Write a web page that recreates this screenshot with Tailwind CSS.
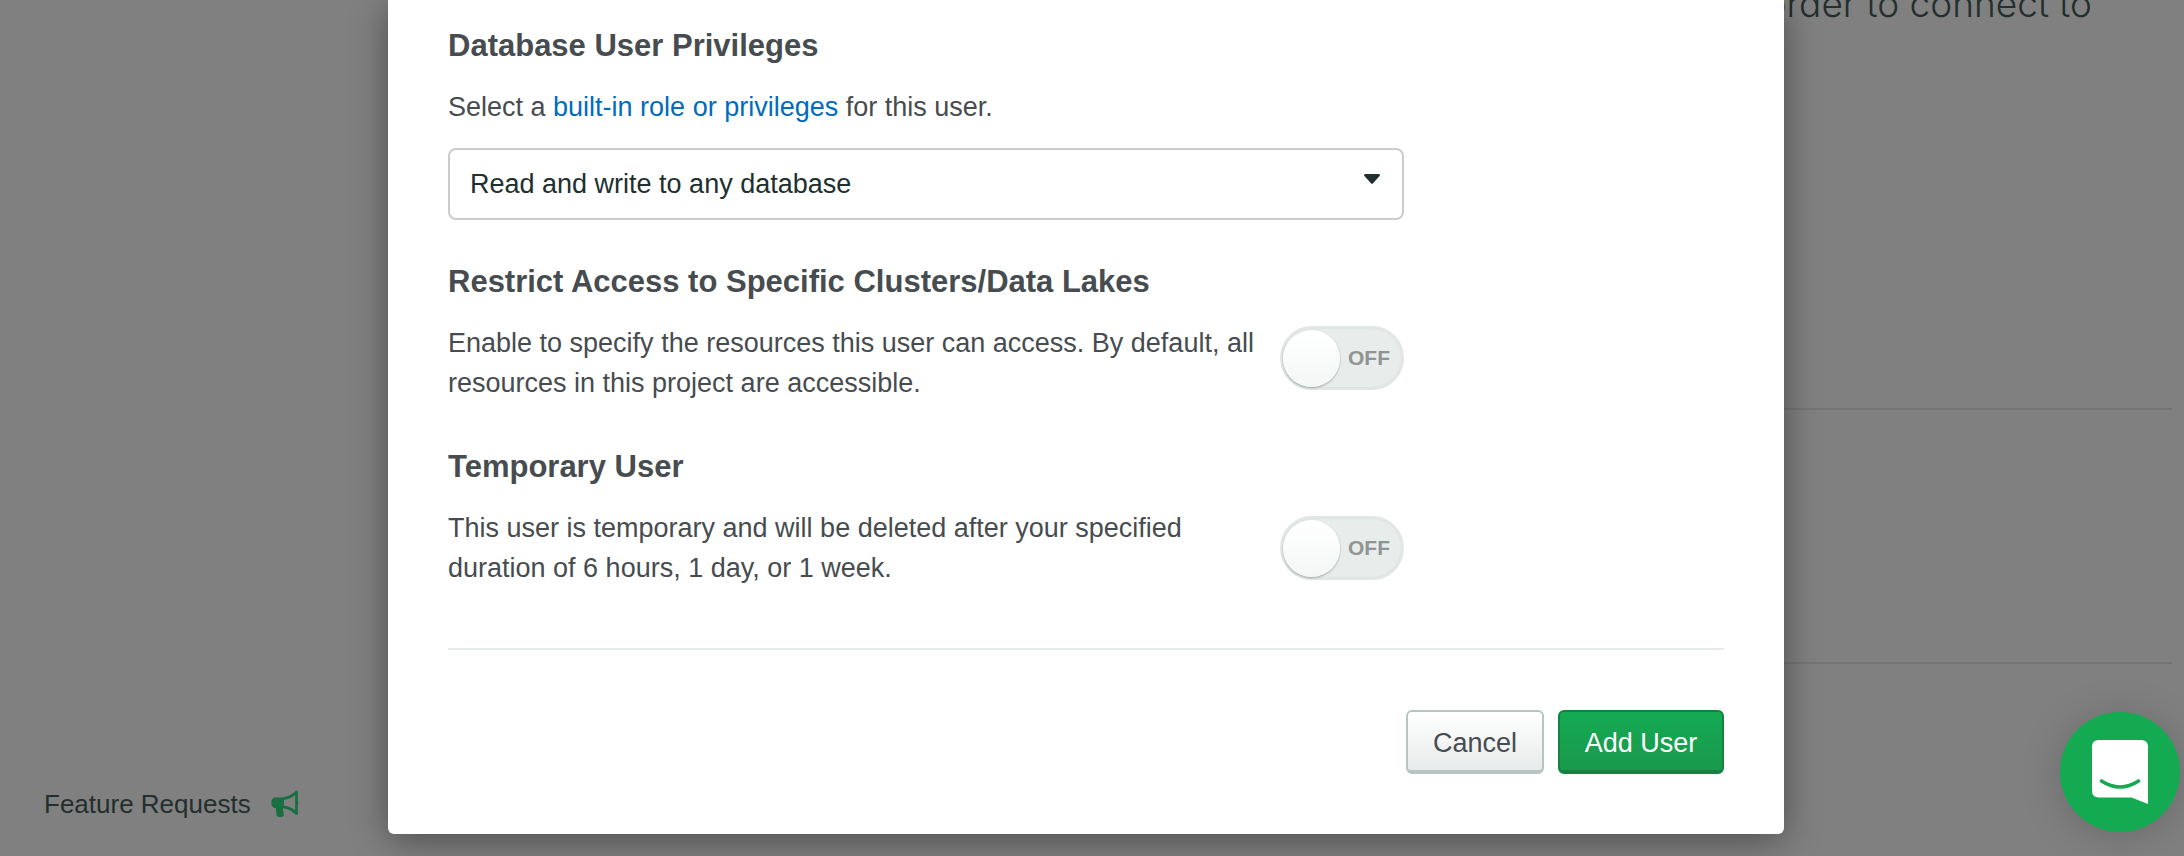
<!DOCTYPE html>
<html lang="en">
<head>
<meta charset="utf-8">
<meta name="viewport" content="width=device-width, initial-scale=1">
<title>Add New Database User</title>
<script src="https://cdn.jsdelivr.net/npm/@tailwindcss/browser@4"></script>
</head>
<body class="relative min-h-screen overflow-x-hidden bg-[#808080] font-['Liberation_Sans',Arial,sans-serif] text-[27px] leading-10 text-[#464c4f]">

  <!-- Dimmed page behind the dialog -->
  <div class="flex min-h-screen">
    <aside class="flex w-[388px] shrink-0 flex-col justify-end pb-8 pl-11">
      <a href="#feature-requests" class="flex items-center gap-5 text-[26px] text-[#232f2d]">
        Feature Requests
        <svg class="h-7 w-7" viewBox="0 0 28 28" fill="none" aria-hidden="true">
          <path d="M3 7.500h10v10.500h-1l.8 7.500-1.300 1.500h-4l-1.800-1.200-1-7.800H3L.5 15.500V10z" fill="#196f3f"/>
          <path d="M12.500 8.500C18 8 22 5.500 25.500 2v21.500C22 20 18 17.500 12.500 17" stroke="#196f3f" stroke-width="2.800" stroke-linejoin="round"/>
          <path d="M26 10.500c1.800.6 1.800 4 0 4.600z" fill="#196f3f"/>
        </svg>
      </a>
    </aside>
    <main class="flex-1 pr-3">
      <section class="h-[410px] overflow-hidden border-b-2 border-[#747575]">
        <h1 class="-mt-[22px] pr-20 text-right font-['Inter',sans-serif] text-[37px] leading-[52px] font-light text-[#232f2d]">order to connect to</h1>
      </section>
      <section class="h-[254px] border-b-2 border-[#747575]"></section>
    </main>
  </div>

  <!-- Dialog -->
  <div class="absolute inset-x-0 top-0 flex justify-center pr-3">
    <form role="dialog" aria-label="Add New Database User" class="w-full max-w-[1396px] rounded-b-md bg-white px-[60px] pt-[26px] pb-[60px] shadow-[0_6px_36px_rgba(0,0,0,0.4)]">
      <div class="max-w-[956px]">
        <h2 class="text-[31px] font-bold">Database User Privileges</h2>
        <p class="mt-[21px]"><label for="role">Select a</label> <a href="#roles" class="text-[#006cbc]">built-in role or privileges</a> for this user.</p>
        <div class="relative mt-[21px]">
          <select id="role" class="h-[72px] w-full appearance-none rounded-lg border-2 border-[#cacccc] bg-white px-5 text-[#21302e]">
            <option>Read and write to any database</option>
          </select>
          <svg class="pointer-events-none absolute top-[26px] right-6 h-[10px] w-4" viewBox="0 0 16 10" aria-hidden="true"><path d="M1 0h14q1.500.6.6 1.900L9 9.300q-1 1.200-2 0L.4 1.900Q-.5.600 1 0z" fill="#21302e"/></svg>
        </div>

        <h2 class="mt-[42px] text-[31px] font-bold">Restrict Access to Specific Clusters/Data Lakes</h2>
        <div class="mt-[21px] flex items-start justify-between">
          <p id="restrict-help" class="max-w-[820px]">Enable to specify the resources this user can access. By default, all resources in this project are accessible.</p>
          <label class="mt-[3px] flex h-16 w-[124px] shrink-0 cursor-pointer items-center rounded-full border-2 border-[#e2e6e6] bg-[#e8eceb] pl-px shadow-[inset_0_0_3px_rgba(0,0,0,0.08)]">
            <input type="checkbox" role="switch" aria-describedby="restrict-help" class="sr-only">
            <span class="size-[57px] rounded-full bg-linear-to-b from-white to-[#f4f7f6] shadow-[0_1px_2px_rgba(80,95,95,0.5)]"></span>
            <span class="ml-2 text-[21px] font-bold text-[#8f9594]">OFF</span>
          </label>
        </div>

        <h2 class="mt-11 text-[31px] font-bold">Temporary User</h2>
        <div class="mt-[21px] flex items-center justify-between">
          <p id="temporary-help" class="max-w-[820px]">This user is temporary and will be deleted after your specified duration of 6 hours, 1 day, or 1 week.</p>
          <label class="flex h-16 w-[124px] shrink-0 cursor-pointer items-center rounded-full border-2 border-[#e2e6e6] bg-[#e8eceb] pl-px shadow-[inset_0_0_3px_rgba(0,0,0,0.08)]">
            <input type="checkbox" role="switch" aria-describedby="temporary-help" class="sr-only">
            <span class="size-[57px] rounded-full bg-linear-to-b from-white to-[#f4f7f6] shadow-[0_1px_2px_rgba(80,95,95,0.5)]"></span>
            <span class="ml-2 text-[21px] font-bold text-[#8f9594]">OFF</span>
          </label>
        </div>
      </div>

      <div class="mt-[60px] flex justify-end gap-[14px] border-t-2 border-[#e7eaea] pt-[60px]">
        <button type="button" class="h-16 min-w-[138px] rounded-md border-2 border-b-4 border-[#b8c4c2] bg-linear-to-b from-white to-[#e8ebeb] px-6 pt-1">Cancel</button>
        <button type="submit" class="h-16 min-w-[166px] rounded-md border-2 border-b-4 border-[#158242] bg-linear-to-b from-[#13aa52] to-[#1a994c] px-6 pt-1 text-white">Add User</button>
      </div>
    </form>
  </div>

  <!-- Chat launcher -->
  <button type="button" aria-label="Open chat" class="fixed right-1 bottom-6 flex size-[120px] items-center justify-center rounded-full bg-[#13aa52] shadow-[0_4px_40px_rgba(0,0,0,0.18)]">
    <svg class="h-16 w-14" viewBox="0 0 56 64" fill="none" aria-hidden="true">
      <path d="M7 0h42q7 0 7 7v57L39.500 57.500H7q-7 0-7-7V7q0-7 7-7z" fill="#fff"/>
      <path d="M9.500 41q18.500 12 37 0" stroke="#13aa52" stroke-width="3.500" stroke-linecap="round"/>
    </svg>
  </button>
</body>
</html>
